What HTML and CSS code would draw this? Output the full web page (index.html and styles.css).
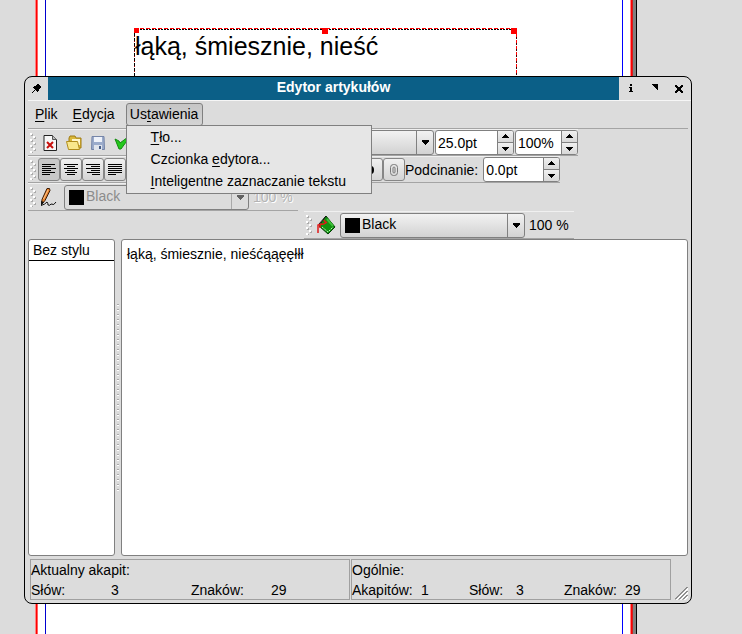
FILE: index.html
```html
<!DOCTYPE html>
<html lang="pl">
<head>
<meta charset="utf-8">
<title>Edytor artykułów</title>
<link rel="stylesheet" href="styles.css">
</head>
<body>
<div class="page">
  <div class="margins"></div>
</div>
<div class="text-frame">
  <i class="knob knob-left"></i><i class="knob knob-mid"></i><i class="knob knob-right"></i>
  łąką, śmiesznie, nieść
</div>

<main class="window">
  <header class="titlebar">
    <button class="title-btn title-pin" aria-label="Przypnij">
      <svg width="9" height="9" viewBox="0 0 9 9"><path d="M5 0h2v1h1v1h1v2h-1v1h-1v2h-1v1h-1v-1h-1v-1h-1v1h-1v1h-1v1h-1v-1h1v-1h1v-1h1v-1h-1v-1h-1v-1h1v-1h2v-1h1z"/></svg>
    </button>
    <h1>Edytor artykułów</h1>
    <button class="title-btn" aria-label="Informacje">
      <svg width="5" height="9" viewBox="0 0 5 9"><path d="M1 0h2v2h-2zM0 3h3v4h1v1h-4v-1h1v-3h-1z"/></svg>
    </button>
    <button class="title-btn" aria-label="Zmień rozmiar">
      <svg width="6" height="9" viewBox="0 0 6 9"><path d="M0 0h6v6h-1v-1h-1v-1h-1v-1h-1v-1h-1v-1h-1z"/></svg>
    </button>
    <button class="title-btn" aria-label="Zamknij">
      <svg width="8" height="8" viewBox="0 0 8 8"><path d="M0 0h2v1h1v1h2v-1h1v-1h2v2h-1v1h-1v2h1v1h1v2h-2v-1h-1v-1h-2v1h-1v1h-2v-2h1v-1h1v-2h-1v-1h-1z"/></svg>
    </button>
  </header>

  <nav class="menubar">
    <button class="menu"><u>P</u>lik</button>
    <button class="menu"><u>E</u>dycja</button>
    <div class="menu-host">
      <button class="menu open">Us<u>t</u>awienia</button>
      <div class="dropdown">
        <button><u>T</u>ło...</button>
        <button>Czcionka <u>e</u>dytora...</button>
        <button><u>I</u>nteligentne zaznaczanie tekstu</button>
      </div>
    </div>
  </nav>

  <section class="toolbars">
    <div class="toolbar">
      <i class="handle"></i>
      <button class="tool" aria-label="Nowy">
        <svg width="14" height="16" viewBox="0 0 14 16"><path d="M1 .5h8.500l4 4v11h-12.500z" fill="#f7f7f7" stroke="#222"/><path d="M9.500 .5v4h4" fill="#bbb" stroke="#555"/><path d="M4 7l6 6M10 7l-6 6" stroke="#c8100c" stroke-width="2" fill="none"/></svg>
      </button>
      <button class="tool" aria-label="Otwórz">
        <svg width="16" height="16" viewBox="0 0 16 16"><path d="M3 3l1-2h5l1 2h5v10h-12z" fill="#d9b83a" stroke="#a07b12"/><path d="M6 4h8v6h-8z" fill="#fff6c8"/><path d="M.5 6.500h11l2 8h-11z" fill="#f8e78c" stroke="#b08c1c"/></svg>
      </button>
      <button class="tool" aria-label="Zapisz">
        <svg width="14" height="14" viewBox="0 0 14 14"><path d="M1 .5h12l.5 13h-13z" fill="#9aabcb" stroke="#7585a8"/><path d="M3 1h8v5h-8z" fill="#eef2fa"/><path d="M3 9h8v5h-8z" fill="#dfe4ec"/><path d="M8 10h2v3h-2z" fill="#445a85"/></svg>
      </button>
      <button class="tool" aria-label="Zastosuj">
        <svg width="16" height="14" viewBox="0 0 16 14"><path d="M1 3l4 2 1 2 8-6 1 1-8 11h-2z" fill="#24c81c" stroke="#148a10"/></svg>
      </button>
      <div class="combo font-combo"><select aria-label="Czcionka"><option></option></select></div>
      <div class="spin spin-size"><input aria-label="Rozmiar" value="25.0pt"><span class="steps"><button aria-label="Więcej"></button><button aria-label="Mniej"></button></span></div>
      <div class="spin spin-scale"><input aria-label="Skala" value="100%"><span class="steps"><button aria-label="Więcej"></button><button aria-label="Mniej"></button></span></div>
    </div>

    <div class="toolbar">
      <i class="handle"></i>
      <button class="push pressed" aria-label="Do lewej"><svg width="14" height="11" viewBox="0 0 14 11"><path d="M0 .5h13M0 2.500h9M0 4.500h14M0 6.500h9M0 8.500h13M0 10.500h8"/></svg></button>
      <button class="push" aria-label="Do środka"><svg width="14" height="11" viewBox="0 0 14 11"><path d="M0 .5h14M3 2.500h8M0 4.500h14M3 6.500h8M1 8.500h12M3 10.500h8"/></svg></button>
      <button class="push" aria-label="Do prawej"><svg width="14" height="11" viewBox="0 0 14 11"><path d="M0 .5h14M5 2.500h9M0 4.500h14M5 6.500h9M1 8.500h13M6 10.500h8"/></svg></button>
      <button class="push" aria-label="Wyjustuj"><svg width="14" height="11" viewBox="0 0 14 11"><path d="M0 .5h14M0 2.500h14M0 4.500h14M0 6.500h14M0 8.500h14M0 10.500h8"/></svg></button>
      <button class="push push-effect" aria-label="Efekty"><svg width="8" height="12" viewBox="0 0 8 12"><ellipse cx="3" cy="6" rx="2" ry="3" fill="none" stroke-width="2"/></svg></button>
      <button class="push" aria-label="Kontur"><svg width="8" height="12" viewBox="0 0 8 12"><rect class="outline" x="0.500" y="0.500" width="7" height="11" rx="3"/><rect class="outline" x="3" y="3" width="2" height="6" rx="1"/></svg></button>
      <label for="kern">Podcinanie:</label>
      <div class="spin spin-kern"><input id="kern" value="0.0pt"><span class="steps"><button aria-label="Więcej"></button><button aria-label="Mniej"></button></span></div>
    </div>

    <div class="toolbar toolbar-stroke">
      <i class="handle"></i>
      <svg class="color-icon" width="18" height="20" viewBox="0 0 18 20"><path d="M7 1.500h2.500l.5 2-5 10-3.500 4 .5-5z" fill="#e8812a" stroke="#3a1c08"/><path d="M8 3l-4.500 9" stroke="#ffc890" fill="none"/><path d="M1 14l3 1-3 4z" fill="#111"/><path d="M1 18.500q4-1 6-3.500 1 1 1 3 2 1 3-1 3 2 5-2" stroke="#111" fill="none"/></svg>
      <div class="combo color-combo disabled"><i class="swatch"></i><select aria-label="Kolor linii" disabled><option>Black</option></select></div>
      <span class="shade etched">100 %</span>
    </div>

    <div class="toolbar toolbar-fill">
      <i class="handle"></i>
      <svg class="color-icon" width="20" height="20" viewBox="0 0 20 20"><path d="M10 1l9 11-7 7-9-8z" fill="#10920f" stroke="#053c05"/><path d="M11 4l6 7" stroke="#3cc038" stroke-width="2" fill="none"/><path d="M6 12l6 5 5-5" stroke="#b9f5b4" stroke-dasharray="2 1" fill="none"/><path d="M10 1l-7 8" stroke="#111" fill="none"/><path d="M11 7q-3 3-6 2l-3 1v8M4 9v4M8 5l2 3" stroke="#e01818" stroke-width="1.500" fill="none"/></svg>
      <div class="combo color-combo"><i class="swatch"></i><select aria-label="Kolor wypełnienia"><option>Black</option></select></div>
      <span class="shade">100 %</span>
    </div>
  </section>

  <section class="editor">
    <ul class="styles"><li>Bez stylu</li></ul>
    <div class="splitter"><i></i></div>
    <textarea class="story" aria-label="Tekst" spellcheck="false">łąką, śmiesznie, nieśćąąęęłłł</textarea>
  </section>

  <footer class="status">
    <div class="panel">
      <p>Aktualny akapit:</p>
      <div class="counts counts-paragraph"><span>Słów:</span><span>3</span><span>Znaków:</span><span>29</span></div>
    </div>
    <div class="panel">
      <p>Ogólnie:</p>
      <div class="counts counts-total"><span>Akapitów:</span><span>1</span><span>Słów:</span><span>3</span><span>Znaków:</span><span>29</span></div>
    </div>
    <svg class="grip" width="13" height="13" viewBox="0 0 13 13"><path d="M1 13L13 1M5 13l8-8M9 13l4-4" stroke="#fff" stroke-width="2"/><path d="M0 12.500L12.500 0M4 12.500L12.500 4M8 12.500L12.500 8" stroke="#333"/></svg>
  </footer>
</main>
</body>
</html>
```
FILE: styles.css
```css
* { box-sizing: border-box; }

body {
  margin: 0;
  min-height: 100vh;
  display: flex;
  background: #dcdcdc;
  color: #000;
  font: 14px/20px "Liberation Sans", Arial, sans-serif;
  overflow: hidden;
}

button, input, select, textarea { font: inherit; color: inherit; margin: 0; }
button { padding: 0; border: 0; background: none; }
h1, p, ul { margin: 0; padding: 0; }
u { text-underline-offset: 2px; text-decoration-thickness: 1px; }

/* Document canvas behind the editor window */
.page {
  flex: 1;
  display: flex;
  margin: 0 105px 0 35px;
  padding: 0 7px;
  background: linear-gradient(to right, #ff8080 1px, #f00 1px 2px, #ff6060 2px 3px, #fff 3px);
  border-right: 1px solid #000;
  position: relative;
}
.page::after {
  content: "";
  position: absolute;
  inset: 0 0 0 auto;
  width: 6px;
  background: linear-gradient(to right, #ff8080 1px, #f00 1px 2px, #d02020 2px 3px, #808080 3px);
}
.margins {
  flex: 1;
  margin: 0 6px 0 3px;
  background:
    linear-gradient(#0000d0, #0000d0) 0 0 / 1px 100% no-repeat,
    linear-gradient(#00f, #00f) 100% 0 / 1px 100% no-repeat;
}

.text-frame {
  position: absolute;
  left: 134px;
  top: 28px;
  width: 383px;
  height: 60px;
  padding-left: 1px;
  font-size: 25px;
  line-height: 36px;
  background:
    repeating-linear-gradient(to right, #f00 0 4px, #fff 4px 6px) 0 0 / 100% 1px no-repeat,
    repeating-linear-gradient(to right, #000 0 2px, #fff 2px 3px) 0 1px / 100% 1px no-repeat,
    repeating-linear-gradient(to bottom, #000 0 3px, #a00 3px 4px, #fff 4px 5px) 0 0 / 1px 100% no-repeat,
    repeating-linear-gradient(to bottom, #f00 0 3px, #400 3px 5px, #fff 5px 6px) 100% 0 / 1px 100% no-repeat;
}
.knob { position: absolute; top: 0; width: 6px; height: 6px; background: #f00; }
.knob-left { left: 0; width: 5px; height: 5px; }
.knob-mid { left: 188px; }
.knob-right { right: 0; }

/* Window frame */
.window {
  position: absolute;
  inset: 76px 50px 30px 24px;
  display: flex;
  flex-direction: column;
  background: #dcdcdc;
  border: 1px solid #000;
  border-radius: 8px;
  padding: 0 3px;
}
.titlebar { display: flex; height: 24px; margin-right: -3px; border-bottom: 1px solid #f6f6f6; }
.titlebar h1 {
  flex: 1;
  background: #0b5f87;
  color: #fff;
  font-size: 14px;
  line-height: 21px;
  text-align: center;
}
.title-btn { width: 24px; display: grid; place-items: center; }
.title-pin { width: 20px; padding-right: 4px; }
.title-btn svg { shape-rendering: crispEdges; }

.menubar { display: flex; height: 28px; padding: 2px 0; border-bottom: 1px solid #a4a4a4; }
.menu { height: 23px; padding: 0 2px 2px; border: 1px solid transparent; margin: 0 8px 0 4px; }
.menu:nth-child(2) { margin: 0 8px 0 1px; }
.menu.open {
  margin: 0;
  border-color: #808080;
  border-radius: 3px;
  background: linear-gradient(#c6c6c6, #d4d4d4);
  width: 77px;
}
.menu-host { position: relative; }
.dropdown {
  position: absolute;
  z-index: 2;
  top: 22px;
  left: 0;
  width: 246px;
  padding-bottom: 1px;
  border: 1px solid #808080;
  background: #e6e6e6;
  display: flex;
  flex-direction: column;
}
.dropdown button { height: 22px; padding-left: 24px; text-align: left; white-space: nowrap; }

/* Toolbars */
.toolbars { display: flex; flex-direction: column; align-items: flex-start; }
.toolbar {
  display: flex;
  align-items: center;
  height: 27px;
  border-top: 1px solid #f0f0f0;
  border-bottom: 1px solid #a4a4a4;
}
.toolbar-stroke { width: 270px; height: 28px; }
.toolbar-fill { width: 270px; height: 28px; margin-left: 276px; }
.handle {
  width: 6px;
  height: 20px;
  margin: 0 2px;
  background:
    radial-gradient(circle at 1px 1px, #fff 1px, transparent 1px) 0 0 / 6px 6px,
    radial-gradient(circle at 2px 2px, #aaa 1px, transparent 1px) 0 0 / 6px 6px,
    radial-gradient(circle at 4px 4px, #fff 1px, transparent 1px) 0 0 / 6px 6px,
    radial-gradient(circle at 5px 5px, #aaa 1px, transparent 1px) 0 0 / 6px 6px;
}
.tool { width: 24px; height: 24px; display: grid; place-items: center; }

.push {
  width: 22px;
  height: 23px;
  display: grid;
  place-items: center;
  border: 1px solid #868686;
  border-radius: 3px;
  background: linear-gradient(#f0f0f0, #d4d4d4);
}
.push.pressed { background: #c8c8c8; }
.push svg { stroke: #000; }
.push .outline { fill: none; stroke: #777; }
.push-effect { margin-left: 235px; }

.combo {
  display: flex;
  align-items: center;
  height: 25px;
  width: 185px;
  border: 1px solid #808080;
  border-radius: 3px;
  background: linear-gradient(#f2f2f2, #d2d2d2);
}
.combo select {
  flex: 1;
  min-width: 0;
  height: 100%;
  padding: 0 0 2px 2px;
  border: 0;
  background: none;
  appearance: none;
  opacity: 1;
}
.combo::after {
  content: "";
  align-self: stretch;
  width: 16px;
  border-left: 1px solid #808080;
  background:
    linear-gradient(#000, #000) 50% 9px / 7px 1px no-repeat,
    linear-gradient(#000, #000) 50% 10px / 7px 1px no-repeat,
    linear-gradient(#000, #000) 50% 11px / 5px 1px no-repeat,
    linear-gradient(#000, #000) 50% 12px / 3px 1px no-repeat,
    linear-gradient(#000, #000) 50% 13px / 1px 1px no-repeat;
}
.combo.disabled { background: #dcdcdc; color: #8c8c8c; }
.combo.disabled::after { opacity: .55; }
.font-combo { width: 200px; margin: 0 1px 0 100px; }
.swatch { width: 15px; height: 15px; margin-left: 4px; background: #000; }
.color-icon { margin: 0 4px 0 2px; }
.toolbar-stroke .color-icon { margin: 0 6px 0 2px; }
.shade { padding-left: 4px; }
.etched { color: #b4b4b4; text-shadow: 1px 1px #fff; }

.spin {
  display: flex;
  height: 25px;
  border: 1px solid #808080;
  border-radius: 3px;
  background: #fff;
  overflow: hidden;
}
.spin input { flex: 1; min-width: 0; padding: 1px 0 0 2px; border: 0; background: none; outline: 0; }
.spin-size { width: 79px; margin-right: 1px; }
.spin-scale { width: 63px; }
.spin-kern { width: 77px; margin-left: 5px; }
.steps { width: 16px; display: flex; flex-direction: column; border-left: 1px solid #808080; }
.steps button {
  flex: 1;
  background:
    linear-gradient(#000, #000) 50% 3px / 1px 1px no-repeat,
    linear-gradient(#000, #000) 50% 4px / 3px 1px no-repeat,
    linear-gradient(#000, #000) 50% 5px / 5px 1px no-repeat,
    linear-gradient(#000, #000) 50% 6px / 7px 1px no-repeat,
    linear-gradient(#f0f0f0, #d8d8d8);
}
.steps button + button {
  border-top: 1px solid #808080;
  background:
    linear-gradient(#000, #000) 50% 4px / 7px 1px no-repeat,
    linear-gradient(#000, #000) 50% 5px / 5px 1px no-repeat,
    linear-gradient(#000, #000) 50% 6px / 3px 1px no-repeat,
    linear-gradient(#000, #000) 50% 7px / 1px 1px no-repeat,
    linear-gradient(#f0f0f0, #d8d8d8);
}

/* Styles list and story text */
.editor { flex: 1; display: flex; min-height: 0; }
.styles {
  width: 87px;
  list-style: none;
  background: #fff;
  border: 1px solid #808080;
  border-radius: 3px;
}
.styles li { height: 21px; padding-left: 4px; border-bottom: 1px solid #000; }
.splitter { width: 6px; display: grid; place-items: center; }
.splitter i {
  width: 2px;
  height: 188px;
  background: repeating-linear-gradient(#aaa 0 1px, #fff 1px 2px, transparent 2px 5px);
}
.story {
  flex: 1;
  min-width: 0;
  padding: 4px 5px;
  resize: none;
  outline: 0;
  background: #fff;
  border: 1px solid #808080;
  border-radius: 3px;
}

/* Status panels */
.status { display: flex; align-items: flex-end; gap: 1px; padding: 3px 0 3px 2px; }
.panel { flex: 1; border: 1px solid #a0a0a0; height: 41px; }
.counts { display: grid; }
.counts-paragraph { grid-template-columns: repeat(3, 80px) auto; }
.counts-total { grid-template-columns: 69px 48px 47px 48px 61px auto; }
.grip { margin-left: 3px; }
```
